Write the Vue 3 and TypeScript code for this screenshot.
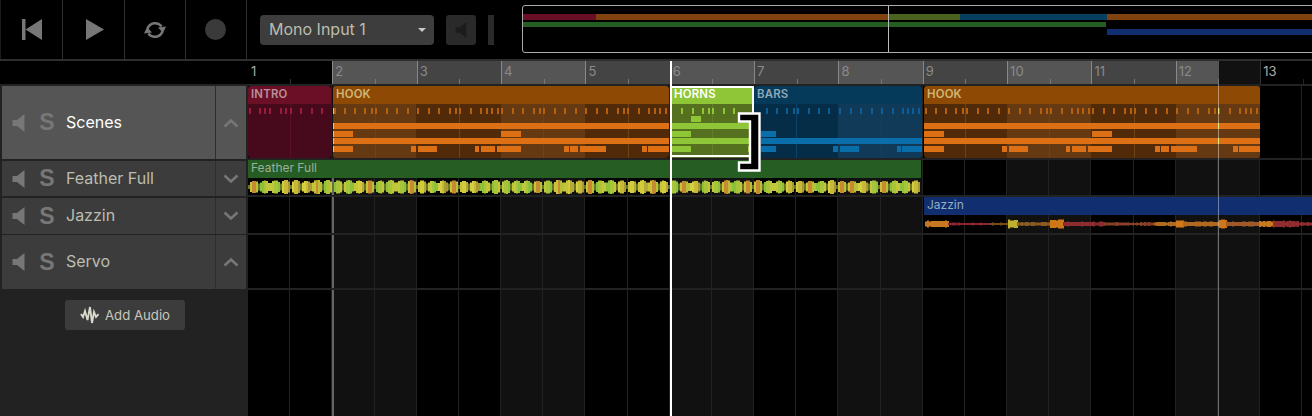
<script setup lang="ts">
interface R { x: number; y: number; w: number; h: number; c: string }
interface Clip { name: string; x: number; w: number; head: string; label: string; rects: R[]; cls?: string }

const BAR = 84.35
const bars = Array.from({ length: 13 }, (_, i) => i + 1)
const bandBars = Array.from({ length: 14 }, (_, i) => i + 1)
const H = 54 // body height

const hookTicks = [1,11,21,31,38,42,53,63,74,84,95,105,116,122,126,137,147,153,158,164,168,179,189,200,206,210,221,231,242,252,263,273,284,290,294,305,315,321,326,332]
const hookR2 = [[0,20],[168,188]]
const hookR4 = [[0,20],[78,83],[85,104],[142,146],[148,162],[164,188],[231,236],[237,245],[247,273],[309,314],[315,336]]

function band(startAbs: number, w: number, odd: string, even: string, line: string): R[] {
  const out: R[] = [{ x: 0, y: 0, w, h: H, c: odd }]
  for (let n = 1; n <= 15; n++) {
    const bx = (n - 1) * BAR
    const rel = bx - startAbs
    if (n % 2 === 0) out.push({ x: Math.round(rel), y: 0, w: Math.round(BAR), h: H, c: even })
    out.push({ x: Math.round(rel + BAR / 2), y: 0, w: 1, h: H, c: line })
  }
  return out
}
const ticks = (xs: number[], c: string): R[] => xs.map(x => ({ x, y: 4, w: 2, h: 6, c }))
const row = (spans: number[][], y: number, c: string): R[] => spans.map(([a, b]) => ({ x: a, y, w: b - a, h: 6, c }))

function hook(start: number, marks: R[]): R[] {
  return [
    ...band(start, 336, '#502a09', '#653a12', '#6f4218'),
    ...ticks(hookTicks, '#b4600f'),
    ...row([[0, 336]], 19, '#dd7014'),
    ...row(hookR2, 27, '#dd7014'),
    ...row([[0, 336]], 34, '#dd7014'),
    ...row(hookR4, 42, '#dd7014'),
    ...marks,
  ]
}
const Y = '#d8d83a'
const startMarks: R[] = [4, 19, 27, 34, 42].map(y => ({ x: 0, y, w: 1, h: 6, c: Y }))
const endMarks: R[] = [4, 19, 34].map(y => ({ x: 294, y, w: 1, h: 6, c: Y }))

const clips: Clip[] = [
  { name: 'INTRO', x: 0, w: 83, head: '#6b0f27', label: '#b9909a',
    rects: [...band(0, 83, '#470a1c', '#470a1c', '#5a1027'), ...ticks([1,11,16,21,32,37,42,52,63,73], '#9a1c3c')] },
  { name: 'HOOK', x: 85, w: 336, head: '#8e4a05', label: '#d0b878', rects: hook(85, startMarks) },
  { name: 'HORNS', x: 423, w: 83, head: '#8fc638', label: '#ffffff', cls: 'selected',
    rects: [
      { x: 0, y: 0, w: 83, h: H, c: '#55701f' },
      { x: 41, y: 0, w: 1, h: H, c: '#627d2c' },
      ...ticks([10,21,31,37,41,52,62], '#8fc638'),
      { x: 20, y: 12, w: 10, h: 6, c: '#8fc638' },
      ...row([[0, 83]], 19, '#8fc638'),
      ...row([[0, 20]], 27, '#8fc638'),
      ...row([[0, 83]], 34, '#8fc638'),
      ...row([[0, 20], [77, 83]], 42, '#8fc638'),
    ] },
  { name: 'BARS', x: 506, w: 168, head: '#063a5b', label: '#8fa8b8',
    rects: [
      ...band(506, 168, '#052d47', '#103a57', '#0d4165'),
      ...ticks([12,22,32,39,43,54,64,74,85,96,106,117,127,138,148,153,158,164], '#0a5f98'),
      ...row([[7, 22]], 27, '#0a6eaa'),
      ...row([[7, 168]], 34, '#0a6eaa'),
      ...row([[7, 22], [79, 84], [86, 105], [143, 147], [148, 168]], 42, '#0a6eaa'),
    ] },
  { name: 'HOOK', x: 676, w: 336, head: '#8e4a05', label: '#d0b878', rects: hook(676, endMarks) },
]

function rnd(i: number): number {
  const v = Math.sin(i * 12.9898) * 43758.5453
  return v - Math.floor(v)
}
const blobPal = [
  ['#8cc23a', '#a8c43a', '#c2c63a'],
  ['#c8c43a', '#d0cc3c', '#b8a836'],
  ['#c0c83c', '#a8c43a', '#8cc23a'],
  ['#d2d040', '#c8b838', '#a89a30'],
  ['#c8c43a', '#c88a30', '#b8c03a'],
]
const featherRects = Array.from({ length: 336 }, (_, i) => {
  const x = i * 2
  const pos = x / 10.5
  const blob = Math.floor(pos)
  const phase = pos - blob
  const env = Math.pow(Math.sin(Math.PI * phase), 0.6)
  const peak = 8 + rnd(blob + 7) * 2.5
  const h = Math.round(4 + peak * env)
  const pal = blobPal[Math.floor(rnd(blob + 90) * blobPal.length)]
  const c = env < 0.45 ? '#6a7424' : pal[Math.min(2, Math.floor(phase * 3))]
  return { x, y: 7 - h / 2, w: 2, h, c }
})

const segs: [number, number, number, string][] = [
  [1, 24, 6, '#c87820'], [24, 66, 2.5, '#8e2430'], [66, 84, 2, '#7a4a18'], [84, 93, 8, '#c0b030'],
  [93, 126, 3.5, '#8a5a20'], [126, 139, 8, '#d07818'], [139, 180, 4, '#8e2c30'], [180, 230, 3, '#8a4028'],
  [230, 252, 4, '#b06a20'], [252, 259, 7, '#d07818'], [259, 295, 4.5, '#b06a20'], [295, 302, 8, '#d07818'],
  [302, 335, 4.5, '#a05a28'], [335, 349, 5.5, '#c87820'], [349, 375, 6, '#8e2c30'], [375, 388, 3.5, '#8e2c30'],
]
const jazzRects: R[] = segs.flatMap(([a, b, h, c], s) =>
  Array.from({ length: Math.ceil((b - a) / 2) }, (_, i) => {
    const hh = Math.max(2, Math.round(h + (rnd(s * 50 + i) - 0.5) * 1.4))
    return { x: a + i * 2, y: 5 - hh / 2, w: 2, h: hh, c }
  }),
)

const tracks = [
  { name: 'Scenes', cls: 'scenes', open: true },
  { name: 'Feather Full', cls: 'feather', open: false },
  { name: 'Jazzin', cls: 'jazzin', open: false },
  { name: 'Servo', cls: 'servo', open: true },
]
const speaker = 'M0 6h4.5L12 0v18L4.5 12H0z'
</script>

<template>
  <div class="app">
    <header class="top">
      <div class="transport">
        <button class="tbtn">
          <svg width="20" height="21" viewBox="0 0 20 21"><path d="M0 0h3.5v21H0zM3.5 10.5L20 0v21z" fill="#777" /></svg>
        </button>
        <button class="tbtn">
          <svg class="play" width="18" height="21" viewBox="0 0 18 21"><path d="M0 0l18 10.5L0 21z" fill="#777" /></svg>
        </button>
        <button class="tbtn">
          <svg width="24" height="20" viewBox="0 0 24 20" fill="none">
            <path d="M4.6 8.5A8 8 0 0 1 18.6 6.5" stroke="#777" stroke-width="2.5" />
            <path d="M19.4 11.5A8 8 0 0 1 5.4 13.5" stroke="#777" stroke-width="2.5" />
            <path d="M15 7.5l8-1-3 6.5zM9 12.5l-8 1 3-6.5z" fill="#777" />
          </svg>
        </button>
        <button class="tbtn">
          <span class="rec"></span>
        </button>
      </div>
      <div class="input">
        <span>Mono Input 1</span>
        <i class="caret"></i>
      </div>
      <button class="monitor">
        <svg width="12" height="16" viewBox="0 0 12 18"><path :d="speaker" fill="#1c1c1c" /></svg>
      </button>
      <div class="meter"></div>
      <div class="overview">
        <div class="ov-row r1">
          <i class="o1"></i><i class="o2"></i><i class="o3"></i><i class="o4"></i><i class="o5"></i>
        </div>
        <div class="ov-row r2"><i class="o6"></i></div>
        <div class="ov-row r3"><i class="o7"></i></div>
        <span class="ov-head"></span>
      </div>
    </header>

    <div class="body">
      <aside class="side">
        <div class="side-ruler"></div>
        <div v-for="t in tracks" :key="t.name" class="track" :class="t.cls">
          <svg class="spk" width="13" height="18" viewBox="0 0 12 18"><path :d="speaker" fill="#777" /></svg>
          <span class="solo">S</span>
          <span class="name">{{ t.name }}</span>
          <span class="fold">
            <svg width="16" height="10" viewBox="0 0 16 10" fill="none">
              <path :d="t.open ? 'M1.5 8.5L8 2.5l6.5 6' : 'M1.5 1.5L8 7.5l6.5-6'" stroke="#777" stroke-width="2.6" />
            </svg>
          </span>
        </div>
        <button class="add">
          <svg width="19" height="20" viewBox="0 0 19 20" fill="none">
            <path d="M1 9l2 3 2-6 2.5 9L10 2l2 16 2-11 2 5 2.5-3" stroke="#d8d8cc" stroke-width="1.9" />
          </svg>
          <span>Add Audio</span>
        </button>
      </aside>

      <main class="main">
        <div class="ruler">
          <div v-for="n in bars" :key="n" class="rbar" :class="[n === 1 ? 'pre' : n === 12 ? 'half' : n > 12 ? 'post' : n % 2 ? 'dk' : 'lt']">
            <span>{{ n }}</span>
          </div>
        </div>

        <div class="lanes">
          <div class="bands">
            <div v-for="n in bandBars" :key="n" class="band" :class="{ gray: n % 2 === 0 }"></div>
          </div>
          <span class="loop-start"></span>

          <div class="lane l-scenes">
            <div v-for="(c, i) in clips" :key="i" class="clip" :class="c.cls" :style="{ left: c.x + 'px', width: c.w + 'px' }">
              <div class="head" :style="{ background: c.head, color: c.label }">{{ c.name }}</div>
              <svg class="cbody" :width="c.w" :height="H" :viewBox="`0 0 ${c.w} ${H}`" shape-rendering="crispEdges">
                <rect v-for="(r, j) in c.rects" :key="j" :x="r.x" :y="r.y" :width="r.w" :height="r.h" :fill="r.c" />
              </svg>
            </div>
          </div>

          <div class="lane l-feather">
            <div class="audio feather-clip">
              <div class="alabel green">Feather Full</div>
              <svg class="wave" width="673" height="14" viewBox="0 0 673 14">
                <rect v-for="(r, j) in featherRects" :key="j" :x="r.x" :y="r.y" :width="r.w" :height="r.h" :fill="r.c" />
              </svg>
            </div>
          </div>

          <div class="lane l-jazzin">
            <div class="audio jazz-clip">
              <div class="alabel blue">Jazzin</div>
              <svg class="wave" width="388" height="10" viewBox="0 0 388 10">
                <rect v-for="(r, j) in jazzRects" :key="j" :x="r.x" :y="r.y" :width="r.w" :height="r.h" :fill="r.c" />
              </svg>
            </div>
          </div>

          <div class="lane l-servo"></div>
        </div>

        <svg class="handle" width="24" height="62" viewBox="0 0 24 62">
          <path d="M2 2.5H22.5V59.5H2V51.5H13V10.5H2z" fill="#000" stroke="#fff" stroke-width="2.4" />
        </svg>
        <span class="loop-end"></span>
        <span class="playhead"></span>
      </main>
    </div>
  </div>
</template>

<style scoped>
.app {
  width: 1312px;
  height: 416px;
  overflow: hidden;
  background: #222;
  font-family: Inter, "Liberation Sans", sans-serif;
  display: flex;
  flex-direction: column;
}
.top {
  flex: none;
  height: 59px;
  background: #000;
  border-bottom: 2px solid #2e2e2e;
  display: flex;
  align-items: center;
  position: relative;
}
.transport {
  flex: none;
  display: flex;
  height: 59px;
  width: 247px;
  padding-left: 2px;
  box-sizing: border-box;
  border-right: 1px solid #2e2e2e;
  box-shadow: inset 1px 0 0 #1c1c1c;
}
.tbtn {
  flex: 1;
  padding: 0;
  margin: 0;
  background: #000;
  border: 0;
  border-right: 1px solid #2e2e2e;
  display: flex;
  align-items: center;
  justify-content: center;
}
.tbtn:last-child { border-right: 0; }
.play { margin-left: 3px; }
.rec {
  width: 21px;
  height: 21px;
  border-radius: 50%;
  background: #3a3a3a;
}
.input {
  margin-left: 13px;
  flex: none;
  width: 174px;
  height: 30px;
  box-sizing: border-box;
  padding: 0 8px 2px 9px;
  border-radius: 4px;
  background: #3d3d3d;
  color: #bcbcae;
  font-size: 16px;
  display: flex;
  align-items: center;
  justify-content: space-between;
}
.caret {
  width: 0;
  height: 0;
  margin-top: 2px;
  border: 4px solid transparent;
  border-top: 4.5px solid #c8c8c8;
  border-bottom: 0;
}
.monitor {
  margin: 0 0 0 12px;
  padding: 0;
  flex: none;
  width: 30px;
  height: 30px;
  background: #2a2a2a;
  border: 0;
  border-radius: 3px;
  display: flex;
  align-items: center;
  justify-content: center;
}
.meter {
  flex: none;
  margin-left: 12px;
  width: 6px;
  height: 30px;
  background: #2a2a2a;
}
.overview {
  flex: none;
  margin-left: 28px;
  margin-top: -1px;
  width: 800px;
  height: 48px;
  box-sizing: border-box;
  border: 1px solid #aaa;
  border-radius: 3px;
  padding-top: 8px;
  position: relative;
  display: flex;
  flex-direction: column;
  gap: 2px;
}
.ov-row { display: flex; height: 6px; }
.ov-row i { display: block; height: 100%; flex: none; }
.r2 { height: 5px; }
.o1 { width: 73px; background: #6b0f27; }
.o2 { width: 292px; background: #80420e; }
.o3 { width: 72px; background: #4a6420; }
.o4 { width: 147px; background: #083f60; }
.o5 { width: 210px; background: #80420e; }
.o6 { width: 583px; background: #265d22; }
.o7 { width: 210px; margin-left: 584px; background: #112e70; }
.ov-head {
  position: absolute;
  left: 365px;
  top: 0;
  bottom: 0;
  width: 1px;
  background: #bbb;
}
.body {
  flex: 1;
  min-height: 0;
  display: flex;
}
.side {
  flex: none;
  width: 248px;
  box-sizing: border-box;
  padding: 0 2px;
  background: #222;
  display: flex;
  flex-direction: column;
}
.side-ruler {
  flex: none;
  height: 23px;
  margin: 0 -2px 2px;
  background: #000;
}
.track {
  flex: none;
  display: flex;
  align-items: center;
  background: #3c3c3c;
  margin-bottom: 2px;
  color: #bcbcb2;
  font-size: 16px;
}
.track.scenes { height: 73px; background: #555; color: #fff; }
.track.feather { height: 35px; }
.track.jazzin { height: 36px; margin-bottom: 1px; }
.track.servo { height: 54px; }
.spk { flex: none; margin-left: 10px; }
.solo {
  flex: none;
  width: 16px;
  margin-left: 14px;
  color: #777;
  font-weight: 700;
  font-size: 23px;
  line-height: 1;
  text-align: center;
  font-family: "Liberation Sans", sans-serif;
}
.name { flex: 1; margin: 0 0 2px 11px; white-space: nowrap; }
.fold {
  flex: none;
  width: 31px;
  align-self: stretch;
  border-left: 1px solid #2e2e2e;
  display: flex;
  align-items: center;
  justify-content: center;
  box-sizing: border-box;
}
.add {
  margin: 9px 0 0 63px;
  width: 120px;
  height: 30px;
  padding: 0;
  background: #3c3c3c;
  border: 0;
  border-radius: 3px;
  color: #c8c8ba;
  font: 13.2px Inter, "Liberation Sans", sans-serif;
  display: flex;
  align-items: center;
  justify-content: center;
  gap: 6px;
}
.main {
  flex: 1;
  min-width: 0;
  position: relative;
  overflow: hidden;
  background: #222;
}
.ruler {
  display: flex;
  height: 23px;
  margin-bottom: 2px;
  background: #000;
}
.rbar {
  flex: none;
  width: 84.35px;
  box-sizing: border-box;
  border-left: 1px solid #888;
  position: relative;
  color: #8a8a8a;
  font-size: 13px;
  line-height: 20px;
  padding-left: 2px;
}
.rbar::after {
  content: "";
  position: absolute;
  left: 50%;
  bottom: 0;
  width: 1px;
  height: 5px;
  background: #777;
}
.rbar.lt { background: #555; }
.rbar.dk { background: #444; }
.rbar.half { background: linear-gradient(90deg, #555 50%, #111 50%); }
.rbar.pre { border-left: 0; color: #aaa; padding-left: 3px; }
.rbar.pre::after { background: #333; }
.rbar.post { border-left-color: #333; color: #aaa; }
.rbar.post::after { background: #222; }
.lanes {
  position: relative;
  height: 332px;
}
.bands {
  position: absolute;
  inset: 0;
  display: flex;
}
.band {
  flex: none;
  width: 84.35px;
  height: 100%;
  background:
    linear-gradient(#222, #222) 50% 0 / 1px 100% no-repeat,
    #000;
  border-right: 1px solid #222;
  box-sizing: border-box;
}
.band.gray {
  background:
    linear-gradient(#222, #222) 50% 0 / 1px 100% no-repeat,
    #111;
}
.loop-start {
  position: absolute;
  left: 84px;
  top: 92px;
  bottom: 0;
  width: 2px;
  background: #666;
}
.lane {
  position: relative;
  border-bottom: 2px solid #222;
}
.l-scenes { height: 72px; }
.l-feather { height: 35px; }
.l-jazzin { height: 36px; }
.l-servo { height: 53px; }
.clip {
  position: absolute;
  top: 0;
  height: 72px;
  border-radius: 3px;
  overflow: hidden;
}
.head {
  height: 18px;
  font-size: 11.4px;
  font-weight: 600;
  line-height: 17px;
  padding-left: 3px;
  letter-spacing: 0.2px;
}
.cbody { display: block; }
.clip.selected {
  border-radius: 0;
  overflow: visible;
}
.clip.selected::after {
  content: "";
  position: absolute;
  inset: 0 0 1px 0;
  border: 2px solid #fff;
  border-left-width: 0;
  pointer-events: none;
}
.audio {
  position: absolute;
  top: 0;
  left: 0;
}
.feather-clip { width: 673px; }
.jazz-clip { left: 676px; width: 388px; }
.alabel {
  height: 18px;
  font-size: 12px;
  line-height: 15px;
  padding-left: 3px;
}
.alabel.green { background: #265d22; color: #9ab09a; }
.alabel.blue { background: #112e70; color: #8fb0c0; }
.wave { display: block; margin-top: 2px; }
.jazz-clip .wave { margin-top: 4px; }
.handle {
  position: absolute;
  left: 489px;
  top: 50px;
}
.loop-end,
.playhead {
  position: absolute;
  bottom: 0;
}
.loop-end { left: 970px; top: 23px; width: 1px; background: rgba(255, 255, 255, 0.4); }
.playhead { left: 422px; top: 0; width: 2px; background: #fff; }
</style>

<style>
html, body { margin: 0; background: #222; }
</style>
